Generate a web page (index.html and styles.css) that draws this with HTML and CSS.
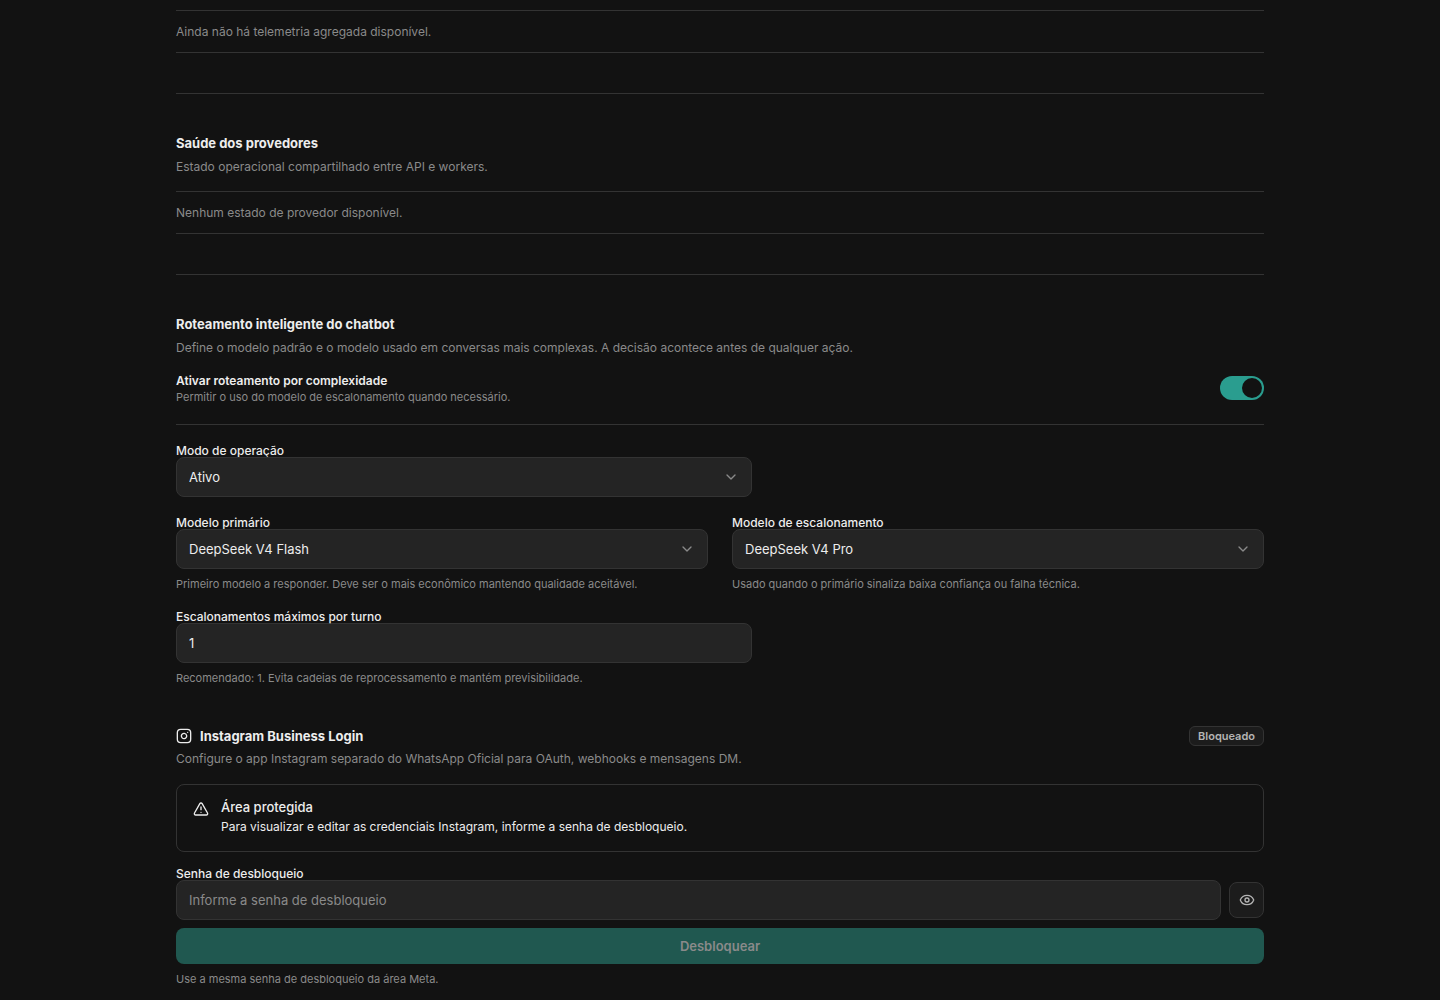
FILE: index.html
```html
<!DOCTYPE html>
<html lang="pt-BR">
<head>
  <meta charset="UTF-8" />
  <meta name="viewport" content="width=device-width, initial-scale=1.0"/>
  <title>Configurações</title>
  <link rel="stylesheet" href="styles.css">
</head>
<body>
  <main class="settings">
    <section class="section">
      <p class="empty-state">Ainda não há telemetria agregada disponível.</p>
    </section>

    <section class="section divided">
      <header class="section-header">
        <h2>Saúde dos provedores</h2>
        <p class="description">Estado operacional compartilhado entre API e workers.</p>
      </header>
      <p class="empty-state">Nenhum estado de provedor disponível.</p>
    </section>

    <section class="section divided">
      <header class="section-header">
        <h2>Roteamento inteligente do chatbot</h2>
        <p class="description">Define o modelo padrão e o modelo usado em conversas mais complexas. A decisão acontece antes de qualquer ação.</p>
      </header>

      <div class="toggle-row">
        <div>
          <label class="toggle-label" for="routing">Ativar roteamento por complexidade</label>
          <p class="hint" id="routingHint">Permitir o uso do modelo de escalonamento quando necessário.</p>
        </div>
        <input class="switch" type="checkbox" role="switch" id="routing" aria-describedby="routingHint" checked>
      </div>

      <div class="fields">
        <div class="field narrow">
          <label for="mode">Modo de operação</label>
          <div class="select-wrap">
            <select id="mode" class="control">
              <option>Ativo</option>
            </select>
            <svg class="chevron" viewBox="0 0 24 24"><path d="m6 9 6 6 6-6"/></svg>
          </div>
        </div>

        <div class="field-grid">
          <div class="field">
            <label for="primaryModel">Modelo primário</label>
            <div class="select-wrap">
              <select id="primaryModel" class="control">
                <option>DeepSeek V4 Flash</option>
                <option>DeepSeek V4 Pro</option>
              </select>
              <svg class="chevron" viewBox="0 0 24 24"><path d="m6 9 6 6 6-6"/></svg>
            </div>
            <p class="hint">Primeiro modelo a responder. Deve ser o mais econômico mantendo qualidade aceitável.</p>
          </div>
          <div class="field">
            <label for="escalationModel">Modelo de escalonamento</label>
            <div class="select-wrap">
              <select id="escalationModel" class="control">
                <option>DeepSeek V4 Pro</option>
                <option>DeepSeek V4 Flash</option>
              </select>
              <svg class="chevron" viewBox="0 0 24 24"><path d="m6 9 6 6 6-6"/></svg>
            </div>
            <p class="hint">Usado quando o primário sinaliza baixa confiança ou falha técnica.</p>
          </div>
        </div>

        <div class="field narrow">
          <label for="maxEscalations">Escalonamentos máximos por turno</label>
          <input id="maxEscalations" class="control" type="number" min="0" value="1">
          <p class="hint">Recomendado: 1. Evita cadeias de reprocessamento e mantém previsibilidade.</p>
        </div>
      </div>
    </section>

    <section class="section instagram">
      <header class="section-header">
        <div class="title-row">
          <svg class="icon" viewBox="0 0 24 24"><rect x="2" y="2" width="20" height="20" rx="5"/><path d="M16 11.37A4 4 0 1 1 12.63 8 4 4 0 0 1 16 11.37z"/><path d="M17.5 6.5h.01"/></svg>
          <h2>Instagram Business Login</h2>
          <span class="badge">Bloqueado</span>
        </div>
        <p class="description">Configure o app Instagram separado do WhatsApp Oficial para OAuth, webhooks e mensagens DM.</p>
      </header>

      <div class="alert" role="alert">
        <svg class="icon" viewBox="0 0 24 24"><path d="m21.73 18-8-14a2 2 0 0 0-3.46 0l-8 14A2 2 0 0 0 4 21h16a2 2 0 0 0 1.73-3"/><path d="M12 9v4"/><path d="M12 17h.01"/></svg>
        <div>
          <h3>Área protegida</h3>
          <p>Para visualizar e editar as credenciais Instagram, informe a senha de desbloqueio.</p>
        </div>
      </div>

      <form class="field unlock">
        <label for="password">Senha de desbloqueio</label>
        <div class="password-row">
          <input id="password" class="control" type="password" placeholder="Informe a senha de desbloqueio">
          <button class="icon-btn" type="button" aria-label="Mostrar senha">
            <svg class="icon" viewBox="0 0 24 24"><path d="M2.06 12.35a1 1 0 0 1 0-.7 10.75 10.75 0 0 1 19.88 0 1 1 0 0 1 0 .7 10.75 10.75 0 0 1-19.88 0"/><circle cx="12" cy="12" r="3"/></svg>
          </button>
        </div>
        <button class="unlock-btn" type="submit" disabled>Desbloquear</button>
        <p class="hint">Use a mesma senha de desbloqueio da área Meta.</p>
      </form>
    </section>
  </main>
</body>
</html>
```
FILE: styles.css
```css
* {
  box-sizing: border-box;
}

body {
  margin: 0;
  background: #121212;
  color: #ededed;
  font-family: Inter, "Liberation Sans", sans-serif;
  font-size: 12px;
  line-height: 17px;
}

h2,
h3,
p {
  margin: 0;
}

.settings {
  max-width: 1152px;
  margin: 0 auto;
  padding: 10px 32px 0;
}

.section {
  padding-bottom: 40px;
}

.divided {
  border-top: 1px solid #333;
  padding-top: 40px;
}

.section-header {
  margin-bottom: 16px;
}

h2 {
  font-size: 13px;
  font-weight: 700;
  line-height: 18px;
}

.description {
  margin-top: 6px;
  color: #8a8a8a;
}

.empty-state {
  padding: 12px 0;
  border-top: 1px solid #333;
  border-bottom: 1px solid #333;
  color: #8a8a8a;
}

.hint {
  color: #8a8a8a;
  font-size: 11px;
  line-height: 14px;
}

.toggle-row {
  display: flex;
  justify-content: space-between;
  align-items: center;
  padding-bottom: 20px;
  border-bottom: 1px solid #333;
}

.toggle-label {
  display: block;
  font-weight: 600;
  line-height: 18px;
}

.switch {
  appearance: none;
  width: 44px;
  height: 24px;
  margin: 0;
  padding: 2px;
  display: flex;
  border-radius: 12px;
  background: #404040;
  cursor: pointer;
}

.switch::before {
  content: "";
  width: 20px;
  height: 20px;
  border-radius: 50%;
  background: #121212;
}

.switch:checked {
  justify-content: flex-end;
  background: #2a9d8f;
}

.fields {
  display: grid;
  gap: 20px;
  padding-top: 20px;
}

.field-grid {
  display: grid;
  grid-template-columns: 1fr 1fr;
  gap: 24px;
}

.field label {
  display: block;
  font-weight: 500;
  line-height: 12px;
}

.field .hint {
  margin-top: 8px;
}

.narrow {
  width: 100%;
  max-width: 576px;
}

.select-wrap {
  position: relative;
}

.control {
  appearance: none;
  display: block;
  width: 100%;
  height: 40px;
  padding: 0 12px;
  border: 1px solid #333;
  border-radius: 8px;
  background: #242424;
  color: #ededed;
  font-family: inherit;
  font-size: 13px;
}

.control[type="number"] {
  appearance: textfield;
}

.control::placeholder {
  color: #8a8a8a;
}

.chevron {
  position: absolute;
  top: 12px;
  right: 13px;
  width: 16px;
  height: 16px;
  fill: none;
  stroke: #8a8a8a;
  stroke-width: 2;
  stroke-linecap: round;
  stroke-linejoin: round;
  pointer-events: none;
}

.icon {
  flex: none;
  width: 16px;
  height: 16px;
  fill: none;
  stroke: currentColor;
  stroke-width: 2;
  stroke-linecap: round;
  stroke-linejoin: round;
}

.instagram {
  padding-top: 1px;
  padding-bottom: 0;
}

.instagram .section-header {
  margin-bottom: 17px;
}

.title-row {
  display: flex;
  align-items: center;
  gap: 8px;
}

.title-row + .description {
  margin-top: 4px;
}

.badge {
  margin-left: auto;
  padding: 0 8px;
  border: 1px solid #333;
  border-radius: 6px;
  background: #1c1c1c;
  color: #b4b4b4;
  font-size: 11px;
  font-weight: 600;
  line-height: 18px;
}

.alert {
  display: flex;
  gap: 12px;
  padding: 13px 16px 16px;
  border: 1px solid #333;
  border-radius: 8px;
}

.alert .icon {
  margin-top: 3px;
}

h3 {
  margin-bottom: 2px;
  font-size: 13px;
  font-weight: 500;
  line-height: 18px;
}

.unlock {
  margin-top: 16px;
}

.password-row {
  display: flex;
  align-items: center;
  gap: 8px;
}

.icon-btn {
  display: flex;
  flex: none;
  align-items: center;
  justify-content: center;
  width: 35px;
  height: 36px;
  padding: 0;
  border: 1px solid #333;
  border-radius: 8px;
  background: #1c1c1c;
  color: #b4b4b4;
  cursor: pointer;
}

.unlock-btn {
  display: block;
  width: 100%;
  height: 36px;
  margin-top: 8px;
  border: none;
  border-radius: 8px;
  background: #205850;
  color: #8a8a8a;
  font-family: inherit;
  font-size: 13px;
  font-weight: 600;
}
```
